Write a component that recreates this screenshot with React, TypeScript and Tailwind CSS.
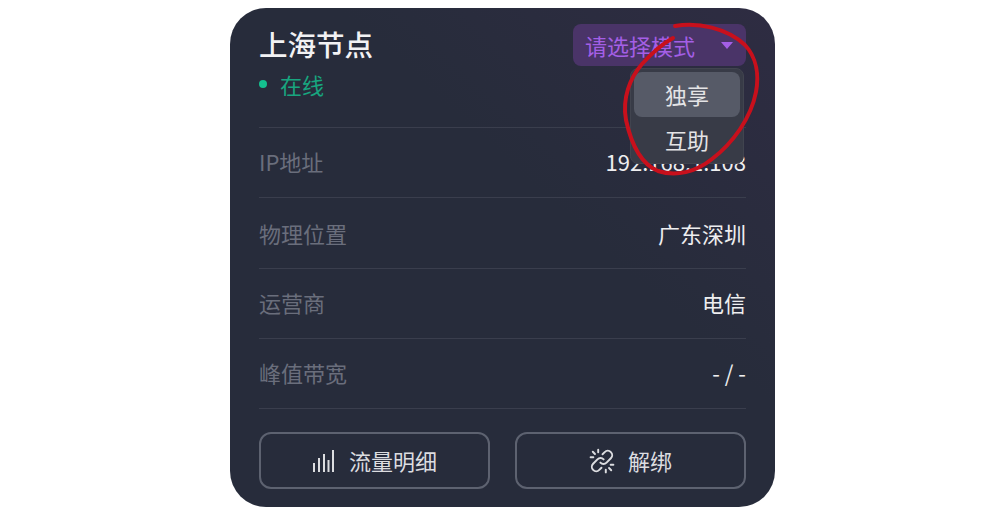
const rows = [
  { label: "IP地址", value: "192.168.1.108", pad: "pb-[2px]" },
  { label: "物理位置", value: "广东深圳", pad: "pt-[2px]" },
  { label: "运营商", value: "电信", pad: "pb-[2px]" },
  { label: "峰值带宽", value: "- / -", pad: "pb-[2px]" },
];

function Bars() {
  return (
    <svg width="22" height="24" viewBox="0 0 22 24" fill="none" stroke="currentColor" strokeWidth="2">
      <path d="M2 23V14M7 23V9M12 23V5M16.5 23V11M21 23V1" />
    </svg>
  );
}

function BrokenLink() {
  return (
    <svg width="26" height="26" viewBox="0 0 24 24" fill="none" stroke="currentColor" strokeWidth="1.8" strokeLinecap="round">
      <path d="M10.5 13.5a4 4 0 0 0 5.7 0l4-4a4 4 0 0 0-5.7-5.7l-2 2" />
      <path d="M13.5 10.5a4 4 0 0 0-5.7 0l-4 4a4 4 0 0 0 5.7 5.7l2-2" />
      <path d="M8.5 1.5V4M3.5 3.5l2 2M1.5 8.5H4M15.5 20v2.5M18.5 18.5l2 2M20 15.5h2.5" />
    </svg>
  );
}

export default function App() {
  return (
    <div className="flex h-[513px] w-[1000px] bg-white pl-[230px] pt-2 font-['Noto_Sans_CJK_SC','Noto_Sans',sans-serif]">
      <div className="relative h-[499px] w-[545px] overflow-hidden rounded-[36px] bg-gradient-to-bl from-[#2e2c42] via-[#272c3b] via-40% to-[#272c3b] px-[29px]">
        {/* Header */}
        <div className="flex h-[120px] justify-between border-b border-[#3a3e4d]">
          <div>
            <div className="mt-[15px] text-[28.5px] font-medium leading-[42px] text-[#f2f2f4]">上海节点</div>
            <div className="mt-[3px] flex items-center gap-[13px] text-[22px] leading-[32px] text-[#18a57f]">
              <span className="h-2 w-2 rounded-full bg-[#14c08f]" />
              在线
            </div>
          </div>
          <div className="mt-4 flex h-[42px] w-[173px] items-center justify-between rounded-lg bg-[#4a3468] pl-3 pr-[13px] text-[22px] text-[#a45fe6]">
            请选择模式
            <span className="h-0 w-0 border-x-[6px] border-t-[7px] border-x-transparent border-t-[#a45fe6]" />
          </div>
        </div>

        {/* Info rows */}
        {rows.map((r) => (
          <div key={r.label} className={`flex h-[70.3px] items-center justify-between border-b border-[#3a3e4d] text-[22px] ${r.pad}`}>
            <span className="text-[#6a6e7c]">{r.label}</span>
            <span className="text-[#eeeef0]">{r.value}</span>
          </div>
        ))}

        {/* Buttons */}
        <div className="mt-[23px] flex justify-between text-[22px] text-[#dcdde0]">
          <button className="flex h-[57px] w-[231px] items-center justify-center gap-[15px] rounded-xl border-2 border-[#5d6270]">
            <Bars />
            流量明细
          </button>
          <button className="flex h-[57px] w-[231px] items-center justify-center gap-[13px] rounded-xl border-2 border-[#5d6270]">
            <BrokenLink />
            解绑
          </button>
        </div>

        {/* Dropdown menu */}
        <div className="absolute left-[400px] top-[60px] flex h-[96px] w-[114px] flex-col rounded-lg border border-[#41444f] bg-[#383b47] p-[3px] text-center text-[22px] text-[#e4e4e6]">
          <div className="flex h-[45px] shrink-0 items-center justify-center rounded-lg bg-[#565a67]">独享</div>
          <div className="flex h-[45px] shrink-0 items-center justify-center">互助</div>
        </div>

        {/* Red annotation */}
        <svg className="absolute left-0 top-0" width="545" height="499" fill="none">
          <path
            d="M445 18C468 14 497 20 515 37C527 50 529 68 526 84C521 110 503 135 482 151C466 164 446 169 428 163C411 156 401 135 396 112C392 90 400 70 412 56C421 46 432 36 443 30"
            stroke="#c8101c"
            strokeWidth="4"
            strokeLinecap="round"
          />
        </svg>
      </div>
    </div>
  );
}
